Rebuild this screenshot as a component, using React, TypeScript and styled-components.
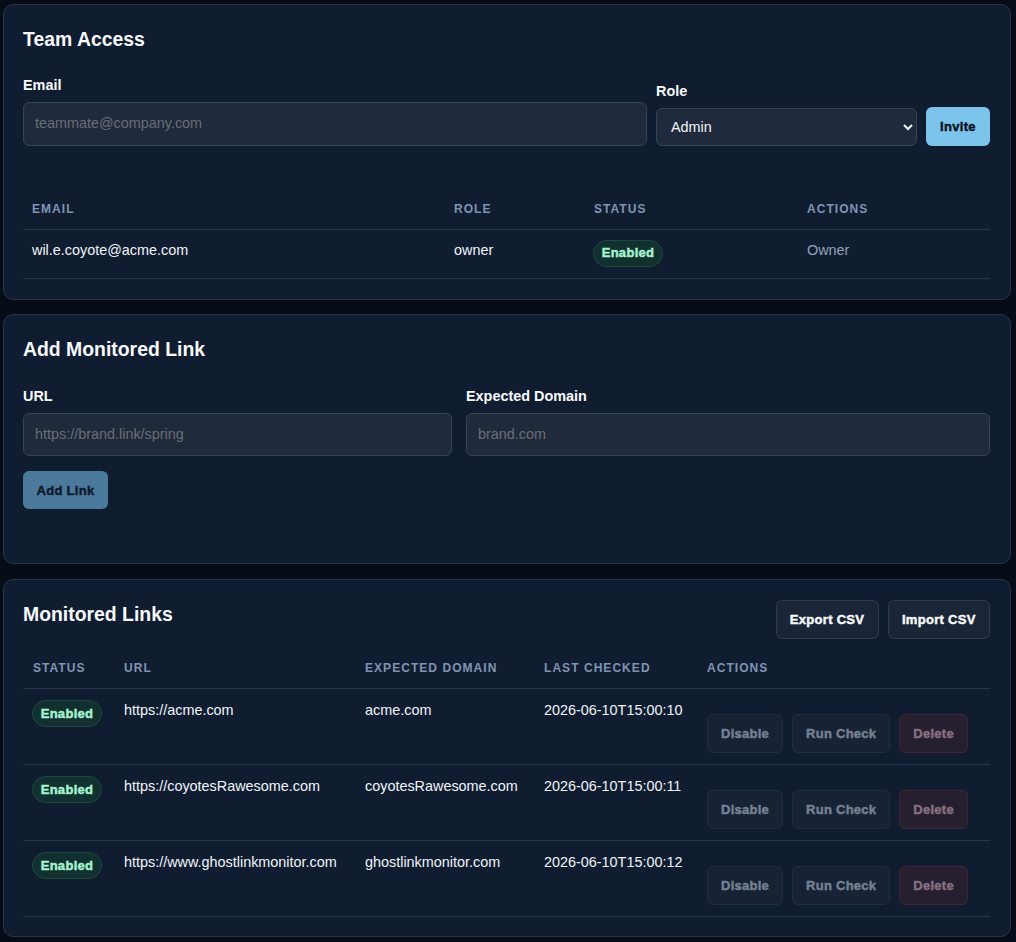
import React from 'react';
import styled, { createGlobalStyle, css } from 'styled-components';

const GlobalStyle = createGlobalStyle`
  * {
    box-sizing: border-box;
  }
  body {
    margin: 0;
    background: #060c18;
    color: #f1f5f9;
    font-family: "Liberation Sans", Arial, sans-serif;
  }
`;

const Page = styled.main`
  display: flex;
  flex-direction: column;
  gap: 14.8px;
  padding: 4px 5px 5px 3px;
`;

const Card = styled.section<{ $height: number }>`
  height: ${({ $height }) => $height}px;
  padding: 20px 20px 20px 19px;
  background: #101d31;
  border: 1px solid #273346;
  border-radius: 10px;
`;

const Title = styled.h2`
  margin: 0;
  font-size: 19.4px;
  line-height: 28px;
  font-weight: 700;
  color: #f8fafc;
`;

const InviteForm = styled.form`
  display: grid;
  grid-template-columns: 624px 261px 64px;
  gap: 9px;
  align-items: end;
  margin-top: 24px;
`;

const LinkForm = styled.form`
  display: grid;
  grid-template-columns: 429px 524px;
  gap: 14px;
  margin-top: 25px;
`;

const Field = styled.label`
  display: flex;
  flex-direction: column;
  gap: 8px;
  font-size: 14.4px;
  line-height: 17px;
  font-weight: 700;
  color: #f8fafc;
`;

const controlStyles = css`
  width: 100%;
  background: #1f2a3c;
  border: 1px solid #364255;
  border-radius: 6px;
  color: #f1f5f9;
  font-family: "Liberation Sans", Arial, sans-serif;
  font-size: 14.4px;
  font-weight: 400;
`;

const Input = styled.input<{ $height: number }>`
  ${controlStyles}
  height: ${({ $height }) => $height}px;
  padding: 0 11px 2px;
  &::placeholder {
    color: #6a6e75;
    opacity: 1;
  }
`;

const Select = styled.select`
  ${controlStyles}
  height: 38px;
  padding: 0 10px;
`;

const heavyText = css`
  font-family: "Liberation Sans", Arial, sans-serif;
  font-size: 13px;
  font-weight: 700;
  letter-spacing: 0.3px;
  -webkit-text-stroke: 0.45px currentColor;
`;

const PrimaryButton = styled.button<{ $dimmed?: boolean; $top?: number }>`
  ${heavyText}
  height: ${({ $dimmed }) => ($dimmed ? 38 : 39)}px;
  margin-top: ${({ $top }) => $top ?? 0}px;
  padding: 0 13.5px;
  background: ${({ $dimmed }) => ($dimmed ? '#4b7a9c' : '#7cc4ec')};
  color: ${({ $dimmed }) => ($dimmed ? '#0e1a2e' : '#0b1220')};
  border: 0;
  border-radius: 6px;
`;

const TableWrap = styled.div<{ $top: number }>`
  margin-top: ${({ $top }) => $top}px;
`;

const Table = styled.table`
  width: 100%;
  table-layout: fixed;
  border-collapse: collapse;
`;

const Head = styled.th<{ $width: number; $height?: number; $top?: number; $left?: number }>`
  width: ${({ $width }) => $width}px;
  height: ${({ $height }) => $height ?? 41}px;
  padding: ${({ $top }) => $top ?? 2}px 9px 0 ${({ $left }) => $left ?? 9}px;
  border-bottom: 1px solid #273346;
  text-align: left;
  font-size: 12px;
  font-weight: 700;
  letter-spacing: 1.05px;
  text-transform: uppercase;
  color: #8094b2;
`;

const LinkHead = styled(Head).attrs({ $height: 42, $top: 1 })``;

const Cell = styled.td<{ $muted?: boolean; $height: number; $pad: number }>`
  height: ${({ $height }) => $height}px;
  padding: ${({ $pad }) => $pad}px 9px 0;
  border-bottom: 1px solid #273346;
  vertical-align: top;
  font-size: 14.4px;
  line-height: 20px;
  white-space: nowrap;
  color: ${({ $muted }) => ($muted ? '#94a3b8' : '#f1f5f9')};
`;

const Badge = styled.span<{ $left: number }>`
  ${heavyText}
  display: inline-flex;
  align-items: center;
  justify-content: center;
  width: 70px;
  height: 27px;
  margin-left: ${({ $left }) => $left}px;
  background: #12302f;
  border: 1px solid #1a4a3d;
  border-radius: 14px;
  color: #a7f3d0;
`;

const ListHeader = styled.div`
  display: flex;
  align-items: flex-start;
  justify-content: space-between;
`;

const ButtonGroup = styled.div`
  display: flex;
  gap: 9px;
`;

const GhostButton = styled.button`
  ${heavyText}
  height: 39px;
  padding: 0 13.3px;
  background: #1a2638;
  border: 1px solid #2f3b4e;
  border-radius: 6px;
  color: #f8fafc;
`;

const RowActions = styled.div`
  display: flex;
  gap: 9px;
  margin-top: 14px;
`;

const RowButton = styled.button<{ $danger?: boolean }>`
  ${heavyText}
  height: 39px;
  padding: 0 13px;
  letter-spacing: 0.26px;
  background: ${({ $danger }) => ($danger ? '#251f30' : '#172335')};
  border: 1px solid ${({ $danger }) => ($danger ? '#42232f' : '#212d3f')};
  border-radius: 6px;
  color: ${({ $danger }) => ($danger ? '#86707f' : '#758192')};
`;

const links = [
  { url: 'https://acme.com', domain: 'acme.com', checked: '2026-06-10T15:00:10' },
  { url: 'https://coyotesRawesome.com', domain: 'coyotesRawesome.com', checked: '2026-06-10T15:00:11' },
  { url: 'https://www.ghostlinkmonitor.com', domain: 'ghostlinkmonitor.com', checked: '2026-06-10T15:00:12' },
];

export default function App() {
  return (
    <>
      <GlobalStyle />
      <Page>
        <Card $height={295.6}>
          <Title>Team Access</Title>
          <InviteForm>
            <Field>
              Email
              <Input $height={44} placeholder="teammate@company.com" />
            </Field>
            <Field>
              Role
              <Select defaultValue="Admin">
                <option>Admin</option>
                <option>Member</option>
              </Select>
            </Field>
            <PrimaryButton type="button">Invite</PrimaryButton>
          </InviteForm>
          <TableWrap $top={42}>
            <Table>
              <thead>
                <tr>
                  <Head $width={422}>Email</Head>
                  <Head $width={140}>Role</Head>
                  <Head $width={213}>Status</Head>
                  <Head $width={192}>Actions</Head>
                </tr>
              </thead>
              <tbody>
                <tr>
                  <Cell $height={49} $pad={10}>wil.e.coyote@acme.com</Cell>
                  <Cell $height={49} $pad={10}>owner</Cell>
                  <Cell $height={49} $pad={10}><Badge $left={-1}>Enabled</Badge></Cell>
                  <Cell $height={49} $pad={10} $muted>Owner</Cell>
                </tr>
              </tbody>
            </Table>
          </TableWrap>
        </Card>

        <Card $height={249.6}>
          <Title>Add Monitored Link</Title>
          <LinkForm>
            <Field>
              URL
              <Input $height={43} placeholder="https://brand.link/spring" />
            </Field>
            <Field>
              Expected Domain
              <Input $height={43} placeholder="brand.com" />
            </Field>
          </LinkForm>
          <PrimaryButton type="button" $dimmed $top={15}>Add Link</PrimaryButton>
        </Card>

        <Card $height={358}>
          <ListHeader>
            <Title>Monitored Links</Title>
            <ButtonGroup>
              <GhostButton type="button">Export CSV</GhostButton>
              <GhostButton type="button">Import CSV</GhostButton>
            </ButtonGroup>
          </ListHeader>
          <TableWrap $top={8}>
            <Table>
              <thead>
                <tr>
                  <LinkHead $width={92} $left={10}>Status</LinkHead>
                  <LinkHead $width={241}>URL</LinkHead>
                  <LinkHead $width={179}>Expected Domain</LinkHead>
                  <LinkHead $width={163}>Last Checked</LinkHead>
                  <LinkHead $width={292}>Actions</LinkHead>
                </tr>
              </thead>
              <tbody>
                {links.map((link) => (
                  <tr key={link.url}>
                    <Cell $height={76} $pad={11}><Badge $left={0}>Enabled</Badge></Cell>
                    <Cell $height={76} $pad={11}>{link.url}</Cell>
                    <Cell $height={76} $pad={11}>{link.domain}</Cell>
                    <Cell $height={76} $pad={11}>{link.checked}</Cell>
                    <Cell $height={76} $pad={11}>
                      <RowActions>
                        <RowButton type="button">Disable</RowButton>
                        <RowButton type="button">Run Check</RowButton>
                        <RowButton type="button" $danger>Delete</RowButton>
                      </RowActions>
                    </Cell>
                  </tr>
                ))}
              </tbody>
            </Table>
          </TableWrap>
        </Card>
      </Page>
    </>
  );
}
